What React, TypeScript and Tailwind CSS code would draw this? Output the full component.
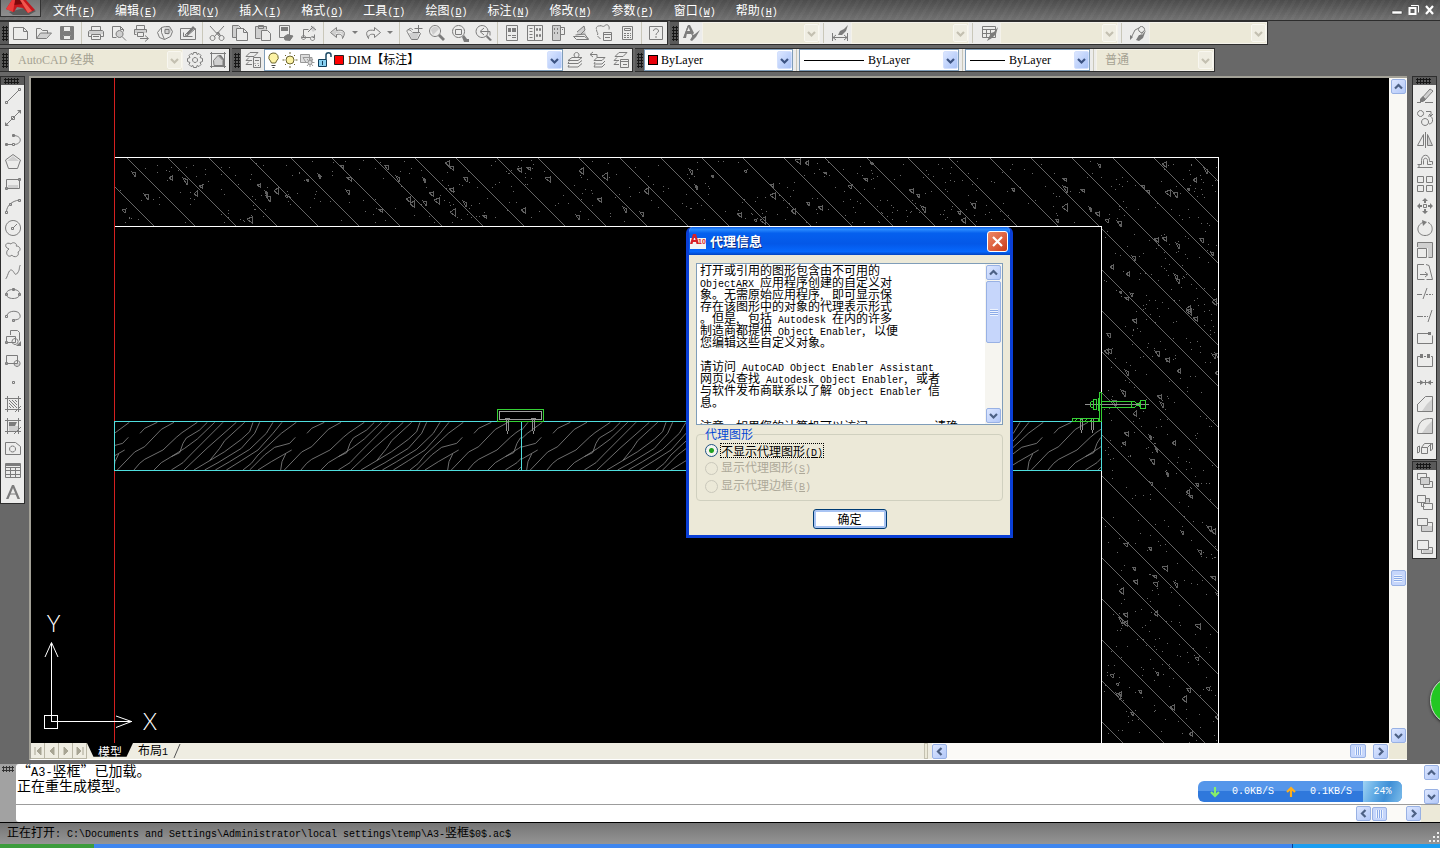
import React from "react";

const CJK = "font-['Noto_Sans_CJK_SC',sans-serif]";
const MONO = "font-['Liberation_Mono',monospace]";
const SERIF = "font-['Liberation_Serif','Noto_Sans_CJK_SC',serif]";

/** Sets half-width runs in a monospace face next to full-width Chinese text. */
function Mixed({ text, latin = "text-[10px]" }: { text: string; latin?: string }) {
  return (
    <>
      {text.split(/([\x20-\x7e]+)/).map((part, i) =>
        i % 2 ? (
          <span key={i} className={`${MONO} ${latin} whitespace-pre`}>
            {part}
          </span>
        ) : (
          part
        ),
      )}
    </>
  );
}

type IconDef = { name: string; d: string; fill?: string; soft?: string };

function Icon({ d, fill, soft }: { d: string; fill?: string; soft?: string }) {
  return (
    <svg width="18" height="18" viewBox="0 0 18 18" fill="none" stroke="#7c7c7c" className="shrink-0" aria-hidden="true">
      {soft && <path d={soft} fill="#cfcfcf" stroke="none" />}
      <path d={d} />
      {fill && <path d={fill} fill="#7c7c7c" stroke="none" />}
    </svg>
  );
}

const FILE_ICONS: IconDef[] = [
  { name: "新建", d: "M1.5 3.5h10l4 4v8h-14zM11.5 3.5v4h4" },
  { name: "打开", d: "M1.5 14.5v-10h4l2 2h5v3M1.5 14.5l4-5.500h11l-5 5.500z", soft: "M2 14l4-5h10l-5 5z" },
  { name: "保存", d: "M2.500 2.500h13v13h-13zM5.500 2.500v5h7v-5M5.500 15.500v-4h7v4", fill: "M3 3h2.500v5h7v-5h2.500v12h-2v-4h-8v4h-2z" },
];
const PRINT_ICONS: IconDef[] = [
  { name: "打印", d: "M4.500 6.500v-4h9v4M4.500 12.500h-3v-5l1-1h13l1 1v5h-3M4.500 10.500h9v5h-9zM6 12.500h6", soft: "M2 7h14v3h-14z" },
  { name: "打印预览", d: "M6.500 13.500h-4v-11h8l3 3v2M10.500 2.500v3h3M9.500 6.500a3.500 3.500 0 1 0 .1 0M12 12.500l4 4", soft: "M6 10a3.500 3.500 0 1 0 7 0a3.500 3.500 0 1 0-7 0" },
  { name: "发布", d: "M3.500 5.500v-4h8v4M3.500 10.500h-2v-5h12v3M4.500 8.500h6v4h-6zM7 14.500h8M12 11.500l3.500 3-3.500 3", soft: "M2 6h11v3h-11z" },
  { name: "三维打印", d: "M9.500 2.500l-4 1-4 5 2 5 5 2 6-3 2-5-3-5zM5.500 3.500v5l3 7M9 5.500h4v4h-4z", soft: "M9 3h5l2 4-4 4-4-3z" },
  { name: "图纸集", d: "M1.500 4.500h15v11h-15zM4.500 12.500h9M4.500 8.500v4M6 11l8-8 2 2-8 7z", fill: "M7 10l7-8 2 2-7 7z" },
];
const EDIT_ICONS: IconDef[] = [
  { name: "剪切", d: "M2 2l10 11M16 2l-10 11M4.500 11.500a2.500 2.500 0 1 0 .1 0M13.500 11.500a2.500 2.500 0 1 0 .1 0", fill: "M8 8h3l2 4h-1z" },
  { name: "复制", d: "M5.500 13.500h-4v-12h6l3 3M5.500 4.500h7l4 4v8h-11zM12.500 4.500v4h4", soft: "M2 2h5l2 2h-4v9h-3z" },
  { name: "粘贴", d: "M6.500 14.500h-5v-12h11v3M4.500 1.500h5v3h-5zM7.500 6.500h6l3 3v7h-9z", soft: "M2 3h10v3h-5v8h-5z" },
  { name: "特性匹配", d: "M2.500 1.500h10v12h-10zM4.500 4.500h6M4.500 6.500h6M7 13l3-2 6 1-3 4h-5z", fill: "M4 3h7v4h-7zM8 12l3-2 5 2-3 5-5-1z" },
  { name: "块编辑器", d: "M8.500 5.500h-5v8M10.500 13.500h-9M12.500 13.500h2v-3M8 8l5-5M11 2l5 4M3.500 11.500a2 2 0 1 0 .1 0M12.500 12.500a2 2 0 1 0 .1 0", soft: "M10 4l4-2 2 4-3 2z" },
];
const UNDO: IconDef = { name: "放弃", d: "M7.500 3.500l-6 5 6 5v-3c5-1 6 1 6 4 5-8-1-9-6-8z", soft: "M7 5l-5 4 5 3v-3h5l3 3-1-4-7-1z" };
const REDO: IconDef = { name: "重做", d: "M10.500 3.500l6 5-6 5v-3c-5-1-6 1-6 4-5-8 1-9 6-8z" };
const VIEW_ICONS: IconDef[] = [
  { name: "平移", d: "M2.500 8.500c-2-3 2-4 4-1M2.500 8.500l4 7h6l3-6-2-2M3 6c2-3 4-1 5 0M7.500 8.500h7M13.500 1v8M9.500 4.500h8", soft: "M4 9h10l-2 6h-5z" },
  { name: "实时缩放", d: "M7 1.500a5.500 5.500 0 1 0 .1 0", fill: "M10 12l2-2 5 5-2 2z", soft: "M3 6c0-3 6-5 8-1l-6 6z" },
  { name: "窗口缩放", d: "M7.500 1.500a6 6 0 1 0 .1 0M4.500 5.500h6v5h-6z", fill: "M11 13l2-2 3 4h2v3h-5z" },
  { name: "缩放上一个", d: "M8 1.500a6 6 0 1 0 .1 0M7 7.500h9v4M10 4l-4 3.500 4 3.500", fill: "M12 13l1-2 5 5-2 1z" },
];
const PALETTE_ICONS: IconDef[] = [
  { name: "特性", d: "M3.500 1.500h11v15h-11zM9 11.500h4M9 13.500h4", fill: "M5 4h3v4h-3zM9 4h4v4h-4zM5 11h3v1h-3z" },
  { name: "设计中心", d: "M1.500 1.500h15v15h-15zM8.500 1.500v15M3.500 4.500h3M3.500 7.500h3M3.500 10.500h3M3.500 13.500h3M10.500 4.500h1v2h-1zM13.500 4.500h1v2h-1zM10.500 10.500h1v2h-1zM13.500 10.500h1v2h-1z" },
  { name: "工具选项板", d: "M3.500 1.500h8v15h-8zM11.500 3.500h4v7h-4M5.500 4v2M8.500 4v2M5.500 8v2M8.500 8v2M13.500 5v1", soft: "M4 2h7v14h-7z" },
  { name: "图纸集管理器", d: "M1.500 12.500l3 3h12l-4-3zM3.500 11l9-1 4 5M5 8l7-6 1 4-4 4", soft: "M5 8l7-6 2 9h-9z" },
  { name: "标记集", d: "M5 1.500c2 0 3 2 5 0s5 0 4 4M1.500 5.500c-1-3 2-4 4-3.500M1.500 6c0 2 2 3 1 5M8.500 8.500h8v8h-8zM8.500 10.500h8M10 13.500h5M2.500 12l3 3" },
  { name: "快速计算器", d: "M4.500 2.500h10v13h-10zM6.500 4.500h6v2h-6z", fill: "M6 9h2v1h-2zM9 9h2v1h-2zM12 9h1v1h-1zM6 11h2v1h-2zM9 11h2v1h-2zM12 11h1v1h-1zM6 13h2v1h-2zM9 13h2v1h-2zM12 13h1v1h-1z" },
];
const HELP: IconDef = { name: "帮助", d: "M2.500 2.500h13v13h-13zM6.500 7c0-3 5-3 5 0 0 2-2.500 1.500-2.500 4M9 12v2" };

const BRUSH = "M9 13l2-4 3-1 4-5-2 7-4 4-5 3z";
const TEXT_STYLE: IconDef = { name: "文字样式", d: "M2 14l4-12h1l4 11M4 9.500h5", fill: "M1 14l5-13h2l4 8-2 2-1-2h-4l-1 5zM5 7h3l-1-4zM8 16l3-5 2-1 5-4-4 7-4 4z" };
const DIM_STYLE: IconDef = { name: "标注样式", d: "M1.500 9v8M16.500 9v8M2 13.500h14M5 11l-3 2.500 3 2.500M13 11l3 2.500-3 2.500", fill: "M7 11l2-4 4-2 4-4-2 6-4 4z" };
const TABLE_STYLE: IconDef = { name: "表格样式", d: "M2.500 2.500h13v11h-13zM2.500 5.500h13M2.500 9.500h13M6.500 5.500v8M10.500 5.500v8", fill: BRUSH };
const LEADER_STYLE: IconDef = { name: "多重引线样式", d: "M2 14l4-8 4-2M12.500 2.500a3 3 0 1 0 .1 0M14 8l-3 4", fill: "M1 16v-5l3 2zM7 16l3-5h3l4-5-3 8-4 3z" };

const GEAR: IconDef = { name: "工作空间设置", d: "M9 6.500a2.500 2.500 0 1 0 .1 0M7.500 1.500h3l.5 2 2-1 2 2-1 2 2.500 1v3l-2.500 1 1 2-2 2-2-1-.5 2h-3l-.5-2-2 1-2-2 1-2-2.500-1v-3l2.500-1-1-2 2-2 2 1z" };
const HOME: IconDef = { name: "我的工作空间", d: "M1 2.500h16M1 15.500h16M2.500 1v16M15.500 1v16M4.500 9.500l4.500-5 5 5v5h-9z", soft: "M5 9l4-4 5 5v5h-9z", fill: "M9 4h3l3 4v7h-1v-6z" };
const LAYER_MANAGER: IconDef = { name: "图层特性管理器", d: "M2 5.500l4-4h8l-4 4zM8 9.500h-6l3-3M8 13.500h-6l3-3M9.500 6.500h7v10h-7zM11 9.500h4M11 12v1M14 12v1M11 14.500h1M14 14.500h1" };
const LAYER_ICONS: IconDef[] = [
  { name: "置为当前图层", d: "M2 9.500l4-3h10l-4 3zM3 10.500l-1 2h10l4-3M3 14l-1 2h10l4-3.500M10.500 1.500a2.500 2.500 0 1 0 .1 0" },
  { name: "上一个图层", d: "M1 3.500h7v3M4 1l-3 2.500 3 2.500M5 9.500l3-3h8l-3 3zM6 11l-1 2h8l3-3M6 14l-1 2h8l3-3" },
  { name: "图层状态管理器", d: "M3 5.500l4-4h8l-4 4zM7 9.500h-5l3-3M7 13.500h-5l3-3M8.500 8.500h8v8h-8zM8.500 10.500h8M11 13.500h4" },
];

const DRAW_ICONS: IconDef[] = [
  { name: "直线", d: "M3 15L15 3M1.500 14.500h2v2h-2zM14.500 1.500h2v2h-2z" },
  { name: "构造线", d: "M2 16L16 2M7.500 7.500h3v3h-3z", fill: "M1 17v-4l4 4zM17 1v4l-4-4z" },
  { name: "多段线", d: "M2 13.500h7M9 4.500c10 0 9 9 1 9M1.500 12.500h2v2h-2zM8.500 12.500h2v2h-2zM8.500 3.500h2v2h-2z" },
  { name: "正多边形", d: "M9 1.500l7.500 5.500-3 8.500h-9l-3-8.500z", soft: "M9 3l6 5h-12z" },
  { name: "矩形", d: "M2.500 4.500h13v9h-13zM1.500 12.500h2v2h-2zM14.500 3.500h2v2h-2z", soft: "M4 10h10v3h-10z" },
  { name: "圆弧", d: "M2.500 15c0-6 5-11 13-12M1.500 14.500h2v2h-2zM5.500 6.500h2v2h-2zM14.500 2.500h2v2h-2z" },
  { name: "圆", d: "M9 1.500a7.500 7.500 0 1 0 .1 0M9 9l4-4M7.500 8.500h2v2h-2z" },
  { name: "修订云线", d: "M5 8c-6-2-3-8 2-5 2-3 7 0 5 2 5 0 5 5 2 6 2 5-5 6-6 3-4 4-8-3-3-6z" },
  { name: "样条曲线", d: "M1.500 16c2-1 3-10 6-9s3 7 6 3 1-6 3-8" },
  { name: "椭圆", d: "M9 4.500c9 0 9 9 0 9s-9-9 0-9M1.500 8.500h2v2h-2zM14.500 8.500h2v2h-2zM8.500 3.500h2v2h-2z" },
  { name: "椭圆弧", d: "M3 8c2-5 12-5 13 0 1 4-3 5-7 5M1.500 8.500h2v2h-2zM8.500 12.500h2v2h-2z" },
  { name: "插入块", d: "M6.500 6v-4.500h7l2 2v8M2.500 7.500h9v6h-9zM11 9.500a3 3 0 1 0 .1 0M1.500 12.500h2v2h-2z", fill: "M17 12v5h-5z" },
  { name: "创建块", d: "M2.500 4.500h11v8h-11zM13 9.500a3 3 0 1 0 .1 0M1.500 11.500h2v2h-2z", soft: "M10 12a3 3 0 0 0 6 0z" },
  { name: "点", d: "M8.500 8.500h2v2h-2z" },
  { name: "图案填充", d: "M1 3.500h16M1 14.500h16M3.500 1v16M14.500 1v16M5 5l8 8M5 8l5 5M8 5l5 5M5 11l2 2M11 5l2 2M11 17l6-6" },
  { name: "渐变色", d: "M1 3.500h16M1 14.500h16M3.500 1v16M14.500 1v16M10 17l7-7", fill: "M5 5h8l-2 4h-6z", soft: "M5 9h9v5h-9z" },
  { name: "面域", d: "M1.500 3.500h10l5 4v8h-15zM8.500 7a3 3 0 1 0 .1 0" },
  { name: "表格", d: "M1.500 2.500h15v14h-15zM1.500 6.500h15M1.500 9.500h15M1.500 13.500h15M6.500 6v10M11.500 6v10", fill: "M2 3h14v2h-14z" },
  { name: "多行文字", d: "M5 11h8", fill: "M2 16l6-14h2l6 14h-2.500l-4.500-11-4.500 11z" },
];

const MODIFY_ICONS: IconDef[] = [
  { name: "删除", d: "M1 15.500h4M9 15.500h8M5 12l9-10 3 2-9 10z", fill: "M4 12l3-3 3 3-3 3h-3z", soft: "M8 9l6-7 2 2-6 8z" },
  { name: "复制", d: "M4.500 1.500a3 3 0 1 0 .1 0M9 9.500a3.500 3.500 0 1 0 .1 0M12 7a4 4 0 1 1 1 8M10 2.500h5v4M13 5l2 2 2-2" },
  { name: "镜像", d: "M9.500 1v16M7.500 3.500v11h-6zM11.500 3.500v11h5z", soft: "M12 5v9h4z" },
  { name: "偏移", d: "M1.500 14.500h15M1.500 11.500h4v-4c0-7 8-7 8 0v1h3v3M3 14.500v-3M7.500 11.500v-4c0-3 4-3 4 0v4h4" },
  { name: "阵列", d: "M1.500 1.500h6v6h-6zM10.500 1.500h6v6h-6zM1.500 10.500h6v6h-6zM10.500 10.500h6v6h-6z" },
  { name: "移动", d: "M7.500 7.500h3v3h-3z", fill: "M9 1l3 3h-2v2h-2v-2h-2zM9 17l3-3h-2v-2h-2v2h-2zM1 9l3-3v2h2v2h-2v2zM17 9l-3-3v2h-2v2h2v2z" },
  { name: "旋转", d: "M7 3.500c-8 3-6 13 2 13 9 0 9-11 3-13", fill: "M6 1l5 2-4 4z" },
  { name: "缩放", d: "M1.500 6v-4.500h15v15h-4M1.500 7.500h9v9h-9z", soft: "M2 2h14v14h-4v-9h-10z" },
  { name: "拉伸", d: "M8 1.500h-6.500v15h7M10 1.500l3 1 3.500 14h-6M4 11.500h7M9 9l3 2.500-3 2.500" },
  { name: "修剪", d: "M1 9.500h5M10 9.500h2M13 9.500h2M16 9.500h1M7 14l4-11" },
  { name: "延伸", d: "M1 9.500h6M8 9.500h2M11 9.500h1M12 15l4-12" },
  { name: "打断于点", d: "M14 4.500h-12.500v10h15v-8", fill: "M12 3h3v3h-3z" },
  { name: "打断", d: "M4 5.500h-2.500v10h15v-10h-1.500M10 5.500h-2", fill: "M4 3h3v4h-3zM11 3h3v4h-3z" },
  { name: "合并", d: "M1 9.500h16M9.500 7v5", fill: "M4 7l4 2.500-4 2.500zM15 7l-4 2.500 4 2.500z" },
  { name: "倒角", d: "M1.500 9v7.500h15v-15h-7l-8 8", soft: "M11 9l5-5v12h-10z" },
  { name: "圆角", d: "M1.500 16.500h15v-15h-3c-8 0-12 5-12 15", soft: "M11 9l5-5v12h-10z" },
  { name: "分解", d: "M5.500 8.500h6v6h-6zM5.500 8.500l3-4h7l-4 4M1.500 8v6l2-1v-6zM14.500 6v6l2-2v-6z" },
];
const ORDER_ICONS: IconDef[] = [
  { name: "前置", d: "M1.500 1.500h9v4M1.500 1.500v6h3M4.500 5.500h9v7h-9zM13 9.500h3.500v6h-9v-3", soft: "M5 6h8v6h-8z" },
  { name: "后置", d: "M1.500 1.500h8v7h-8zM9.500 4.500h4v4M5.500 8.500v4h3M7.500 9.500h9v6h-9z", soft: "M10 5h3v4h-3z" },
  { name: "置于对象之上", d: "M1.500 2.500h10v7h-10zM11.500 6.500h5v9h-11v-6", soft: "M6 10h10v5h-10z" },
  { name: "置于对象之下", d: "M1.500 2.500h11v9h-11zM12.500 9.500h4v6h-11v-4", soft: "M7 12h9v3h-9z" },
];

function ToolButton({ icon }: { icon: IconDef }) {
  return (
    <button type="button" aria-label={icon.name} className="flex h-[22px] w-[23px] shrink-0 items-center justify-center">
      <Icon d={icon.d} fill={icon.fill} soft={icon.soft} />
    </button>
  );
}

function Buttons({ icons }: { icons: IconDef[] }) {
  return (
    <>
      {icons.map((icon) => (
        <ToolButton key={icon.name} icon={icon} />
      ))}
    </>
  );
}

function Sep() {
  return (
    <div className="flex w-1.5 shrink-0 justify-center">
      <div className="h-full w-px bg-[#c9c7ba]" />
    </div>
  );
}

function Grip({ vertical }: { vertical?: boolean }) {
  const dots = "bg-[radial-gradient(#161616_50%,transparent_55%)] bg-[length:3px_3px]";
  return vertical ? (
    <div className="flex h-2 w-full items-center bg-[#5a5a5a] px-[3px]">
      <div className={`h-[6px] w-[15px] ${dots}`} />
    </div>
  ) : (
    <div className="flex w-[9px] shrink-0 items-center justify-center bg-[#5a5a5a]">
      <div className={`h-[15px] w-[6px] ${dots}`} />
    </div>
  );
}

function Bar({ label, children }: { label: string; children: React.ReactNode }) {
  return (
    <div role="toolbar" aria-label={label} className="flex h-6 shrink-0 border-y border-r border-[#2e2e2e] bg-[#ececeb]">
      <Grip />
      {children}
    </div>
  );
}

function Chevron({ dir, className = "stroke-[#4d6185]" }: { dir: "up" | "down" | "left" | "right"; className?: string }) {
  const d = {
    up: "M1 6.500l3.500-3.500 3.500 3.500",
    down: "M1 3l3.500 3.500 3.500-3.500",
    left: "M6.500 1l-3.500 3.500 3.500 3.500",
    right: "M3 1l3.500 3.500-3.500 3.500",
  }[dir];
  return (
    <svg width="9" height="9" viewBox="0 0 9 9" fill="none" strokeWidth="2.200" className={className} aria-hidden="true">
      <path d={d} />
    </svg>
  );
}

function Combo({
  label,
  value = "",
  width,
  disabled,
  lead,
  pad = "pl-1",
}: {
  label: string;
  value?: string;
  width: string;
  disabled?: boolean;
  lead?: React.ReactNode;
  pad?: string;
}) {
  return (
    <div
      className={`flex shrink-0 items-center border ${width} ${
        disabled ? "border-[#f4f2ea] bg-[#ece9d8]" : "border-[#7f9db9] bg-white"
      }`}
    >
      {lead}
      <select
        aria-label={label}
        disabled={disabled}
        className={`h-full min-w-0 flex-1 appearance-none bg-transparent text-xs opacity-100 outline-none ${pad} ${SERIF} ${
          disabled ? "text-[#a5a293]" : "text-black"
        }`}
      >
        <option>{value}</option>
      </select>
      <span
        className={`pointer-events-none flex h-[18px] w-[15px] shrink-0 items-center justify-center rounded-[2px] border ${
          disabled ? "border-[#f8f7f0] bg-[#efede2]" : "border-[#d3e0fd] bg-linear-to-br from-[#dbe6ff] to-[#a9c2f7]"
        }`}
      >
        <Chevron dir="down" className={disabled ? "stroke-[#c3c0b1]" : "stroke-[#3c5382]"} />
      </span>
    </div>
  );
}

function ScrollButton({ label, dir }: { label: string; dir: "up" | "down" | "left" | "right" }) {
  return (
    <button
      type="button"
      aria-label={label}
      className="flex size-[15px] shrink-0 items-center justify-center rounded-[2px] border border-[#98b1e4] bg-linear-to-br from-[#dde7ff] to-[#b3c8f8]"
    >
      <Chevron dir={dir} />
    </button>
  );
}

function Thumb({ className, horizontal }: { className: string; horizontal?: boolean }) {
  return (
    <div className={`flex shrink-0 items-center justify-center rounded-[2px] border border-[#98b1e4] bg-[#c6d6fb] ${className}`}>
      <div
        className={
          horizontal
            ? "h-2 w-[7px] bg-[repeating-linear-gradient(90deg,#eef4fe_0_1px,#8cabe8_1px_2px)]"
            : "h-[7px] w-2 bg-[repeating-linear-gradient(#eef4fe_0_1px,#8cabe8_1px_2px)]"
        }
      />
    </div>
  );
}

const MENUS: [string, string][] = [
  ["文件", "F"],
  ["编辑", "E"],
  ["视图", "V"],
  ["插入", "I"],
  ["格式", "O"],
  ["工具", "T"],
  ["绘图", "D"],
  ["标注", "N"],
  ["修改", "M"],
  ["参数", "P"],
  ["窗口", "W"],
  ["帮助", "H"],
];

function Accel({ k }: { k: string }) {
  return (
    <span className={`${MONO} text-[10px]`}>
      (<span className="underline">{k}</span>)
    </span>
  );
}

function MenuBar() {
  return (
    <header className="flex h-[21px] shrink-0 items-start justify-between border-b border-[#2d2d2d] bg-[repeating-linear-gradient(120deg,#ffffff08_0_3px,transparent_3px_7px),linear-gradient(#4c4c4c,#717171)]">
      <div className="flex items-start">
        <button type="button" aria-label="应用程序菜单" className="h-[17px] w-[41px] border border-t-0 border-[#333] bg-linear-to-b from-[#777] to-[#8f8f8f]">
          <svg width="38" height="16" viewBox="0 0 38 16" aria-hidden="true">
            <path d="M8 12l4 3h16l7-4-8-4z" fill="#5a5a5a" />
            <path d="M5 9L11 0h14l9 10-7 3-5-5-6-1-3 5z" fill="#c5161c" />
            <path d="M14 0h6l2 4-9 1z" fill="#7d080c" />
            <path d="M5 9L11 0h3l-2 12z" fill="#ec3b3b" />
            <path d="M22 0l9 11-4 2-8-13z" fill="#f05850" />
          </svg>
        </button>
        <nav className={`flex gap-5 pl-3 text-xs leading-5 text-white ${CJK}`}>
          {MENUS.map(([name, k]) => (
            <button key={name} type="button" className="whitespace-nowrap">
              {name}
              <Accel k={k} />
            </button>
          ))}
        </nav>
      </div>
      <div className="flex gap-1 pt-1 pr-1">
        <button type="button" aria-label="最小化">
          <svg width="13" height="12" viewBox="0 0 13 12" aria-hidden="true">
            <path d="M2 7h10v3h-10z" fill="#fff" stroke="#333" strokeWidth=".5" />
          </svg>
        </button>
        <button type="button" aria-label="还原">
          <svg width="13" height="12" viewBox="0 0 13 12" fill="none" stroke="#fff" aria-hidden="true">
            <path d="M4 1.500h7.500v7" />
            <path d="M2.500 4h6v6h-6z" strokeWidth="2" />
          </svg>
        </button>
        <button type="button" aria-label="关闭">
          <svg width="12" height="12" viewBox="0 0 12 12" fill="none" stroke="#fff" strokeWidth="2.200" aria-hidden="true">
            <path d="M2 2l7 8M9 2l-7 8" />
          </svg>
        </button>
      </div>
    </header>
  );
}

function DropArrow({ label }: { label: string }) {
  return (
    <button type="button" aria-label={label} className="flex w-3 shrink-0 items-center justify-center">
      <svg width="6" height="4" viewBox="0 0 6 4" aria-hidden="true">
        <path d="M0 0h6l-3 3z" fill="#7c7c7c" />
      </svg>
    </button>
  );
}

function StyleCombo({ icon }: { icon: IconDef }) {
  return (
    <>
      <ToolButton icon={icon} />
      <Combo label={icon.name} width="w-[118px]" disabled />
    </>
  );
}

function WideSep() {
  return <div className="my-px mr-1 ml-[3px] w-px shrink-0 bg-[#c9c7ba]" />;
}

function LayerState() {
  return (
    <svg width="80" height="18" viewBox="0 0 80 18" fill="none" className="shrink-0" aria-hidden="true">
      <path d="M8 2a4.500 4.500 0 0 0-2.500 8l1 2h4l1-2a4.500 4.500 0 0 0-3.500-8z" fill="#fdf3a4" stroke="#6b642e" />
      <path d="M6.500 14.500h4M7.500 16.500h2" stroke="#444" />
      <circle cx="25" cy="9" r="4" fill="#fdf3a4" stroke="#6b642e" />
      <path d="M25 1v2M25 15v2M17.500 9h2M30.500 9h2M20 4l1 1M29 13l1 1M20 14l1-1M29 5l1-1" stroke="#6b642e" />
      <path d="M35.500 3.500h9v8h-9zM38 6.500h9v5h-6z" stroke="#999" fill="#ddd" />
      <path d="M45 7v9M40.500 11.500h9M42 8l6 7M48 8l-6 7" stroke="#999" />
      <circle cx="45" cy="11.500" r="2" fill="#ddd" stroke="#999" />
      <path d="M61 8v-4c0-3 5-3 5 0v2" stroke="#1d4b66" strokeWidth="1.500" />
      <path d="M53.500 8.500h8v7h-8z" fill="#88d0f0" stroke="#123f5c" />
      <path d="M57.500 10v4" stroke="#123f5c" />
      <path d="M69.500 4.500h9v9h-9z" fill="#f00" stroke="#222" />
    </svg>
  );
}

const LINE = "h-px shrink-0 bg-black";

function Toolbars() {
  return (
    <div className="flex shrink-0 flex-col gap-[3px] overflow-hidden bg-[#686868] pb-1">
      <div className="flex gap-0.5">
        <Bar label="标准">
          <Buttons icons={FILE_ICONS} />
          <Sep />
          <Buttons icons={PRINT_ICONS} />
          <Sep />
          <Buttons icons={EDIT_ICONS} />
          <Sep />
          <ToolButton icon={UNDO} />
          <DropArrow label="放弃列表" />
          <ToolButton icon={REDO} />
          <DropArrow label="重做列表" />
          <Sep />
          <Buttons icons={VIEW_ICONS} />
          <Sep />
          <Buttons icons={PALETTE_ICONS} />
          <Sep />
          <ToolButton icon={HELP} />
        </Bar>
        <Bar label="样式">
          <StyleCombo icon={TEXT_STYLE} />
          <WideSep />
          <StyleCombo icon={DIM_STYLE} />
          <WideSep />
          <StyleCombo icon={TABLE_STYLE} />
          <WideSep />
          <StyleCombo icon={LEADER_STYLE} />
        </Bar>
      </div>
      <div className="flex gap-0.5">
        <Bar label="工作空间">
          <Combo label="工作空间" value="AutoCAD 经典" width="w-[174px]" pad="pl-2" disabled />
          <Buttons icons={[GEAR, HOME]} />
        </Bar>
        <Bar label="图层">
          <ToolButton icon={LAYER_MANAGER} />
          <Combo label="图层" value="DIM【标注】" width="w-[299px]" pad="pl-[3px]" lead={<LayerState />} />
          <Buttons icons={LAYER_ICONS} />
        </Bar>
        <Bar label="特性">
          <Combo
            label="颜色"
            value="ByLayer"
            width="w-[149px]"
            pad="pl-[3px]"
            lead={<span className="ml-[3px] size-2.5 shrink-0 border border-black bg-red-600" />}
          />
          <Sep />
          <Combo label="线型" value="ByLayer" width="w-[160px]" lead={<span className={`ml-1 w-[60px] ${LINE}`} />} />
          <Sep />
          <Combo label="线宽" value="ByLayer" width="w-[125px]" lead={<span className={`ml-1 w-[35px] ${LINE}`} />} />
          <Sep />
          <Combo label="打印样式" value="普通" width="w-[118px]" pad="pl-2" disabled />
        </Bar>
      </div>
    </div>
  );
}

/* ---------- drawing ---------- */

function random(seed: number) {
  let s = seed;
  return () => {
    s = (s * 1664525 + 1013904223) % 4294967296;
    return s / 4294967296;
  };
}

function concrete() {
  const rnd = random(7);
  let stones = "";
  let grit = "";
  let n = 0;
  while (n < 1000) {
    const x = Math.round(116 + rnd() * 1100);
    const y = Math.round(160 + rnd() * 582);
    if (y > 222 && x < 1104) continue;
    n++;
    if (n % 6 === 0) {
      const a = 3 + Math.round(rnd() * 2);
      const b = Math.round(rnd() * 3);
      stones += rnd() > 0.5 ? `M${x} ${y}l${a} ${b - 1}l-1 ${a}z` : `M${x} ${y}l${a} ${a - 1}v-${a + b - 1}z`;
    } else {
      grit += `M${x} ${y}h1`;
    }
  }
  return { stones, grit };
}

const CONCRETE = concrete();
const HATCH = Array.from({ length: 28 }, (_, i) => {
  const x = Math.round(85 + i * 41.08);
  return `M${x} 157l640 640`;
}).join("");

/* One repeat of the wood grain, 502 units wide at a third of a pixel. */
const GRAIN = [
  "M96 850L110 835L148 817",
  "M28 960L80 906L110 890L160 838L198 817",
  "M78 960L95 940L110 928L165 900L205 862L222 848L268 817",
  "M138 960L160 938L190 920L215 908L225 880L235 864L275 840L298 817",
  "M190 920L230 895L268 867L320 817",
  "M190 960L225 938L250 912L345 817",
  "M228 960L300 892L385 817",
  "M258 960L305 932L335 895L350 872L410 817",
  "M305 932L350 905L400 868L425 845L435 817",
  "M290 960L330 938L400 895L440 850L455 817",
  "M322 960L365 935L425 898L475 850L495 817",
  "M355 960L400 932L450 900L495 850L522 817",
  "M405 960L430 940L450 915L520 850L565 817",
  "M425 960L470 915L500 892L545 880L562 862",
  "M450 960L490 935L551 900",
  "M518 960L522 935L533 912",
].join("");

function Grain({ starts, clip }: { starts: number[]; clip: string }) {
  return (
    <g clipPath={clip} stroke="#8a8a8a" shapeRendering="auto">
      {starts.map((x) => (
        <path key={x} d={GRAIN} transform={`translate(${x - 32} 150) scale(.33333)`} strokeWidth="2.400" />
      ))}
    </g>
  );
}

function Drawing() {
  return (
    <svg role="img" aria-label="模型空间" className="absolute inset-0 size-full bg-black" fill="none" shapeRendering="crispEdges">
      <defs>
        <clipPath id="wall">
          <path d="M114 157H1218V760H1101V226H114z" />
        </clipPath>
        <clipPath id="panel-a">
          <path d="M114 421H521V470H114z" />
        </clipPath>
        <clipPath id="panel-b">
          <path d="M521 421H1101V470H521z" />
        </clipPath>
      </defs>
      <g transform="translate(-31 -78)">
        <g clipPath="url(#wall)">
          <path d={HATCH} stroke="#656565" />
          <path d={CONCRETE.stones} stroke="#606060" />
          <path d={CONCRETE.grit} stroke="#666" transform="translate(0 .5)" />
        </g>
        <path d="M114 157.500H1218.500V760M114 226.500H1101.500V760" stroke="#fff" />
        <Grain starts={[-27, 140, 307, 474]} clip="url(#panel-a)" />
        <Grain starts={[386, 553, 720, 887, 1054]} clip="url(#panel-b)" />
        <path d="M114.500 78V760" stroke="#d42020" />
        <path d="M114.500 421.500H1101.500V470.500H114.500zM521.500 421V470" stroke="#4fdede" />
        <path d="M497.500 409.500h46v12h-46z" stroke="#35d035" />
        <path d="M499.500 411.500h42v8h-42z" stroke="#a0a0a0" />
        <path d="M505 418.500h5M531 418.500h5M506.500 419v12M508.500 419v12M507.500 431v3M532.500 419v12M534.500 419v12M533.500 431v3" stroke="#909090" />
        <path d="M1080.500 418v12M1082.500 418v12M1081.500 430v3M1091.500 418v12M1093.500 418v12M1092.500 430v3M1085 404.500h64" stroke="#909090" />
        <path d="M1072.500 418.500h26v3h-26zM1099.500 392.500h2v29h-2zM1075 421l3-3M1080 421l3-3M1085 421l3-3M1090 421l3-3" stroke="#35d035" />
        <path d="M1098.500 398v13M1096.500 399.500h-3v10h3zM1093.500 400.500l-3 2v4l3 2M1101.500 401.500h30M1101.500 407.500h30M1131.500 402v5M1131 401.500h3l3 2h2l2-3h4.500v8h-4.500l-2-3h-2l-3 2h-3M1140.500 400v9" stroke="#35d035" />
        <g stroke="#fff">
          <path d="M44.500 715.500h13v13h-13zM51.500 721.500V642.500M51.500 721.500H132" />
          <path d="M45 657l6.500-14.500 6.500 14.500M116 716l15.500 5.500-15.500 6" shapeRendering="auto" />
        </g>
        <g fill="#fff" className="font-['Lato',sans-serif] text-[23px] font-light" textAnchor="middle">
          <text x="53.500" y="632">Y</text>
          <text x="150" y="730">X</text>
        </g>
      </g>
    </svg>
  );
}

/* ---------- dialog ---------- */

const PROXY_TEXT = [
  "打开或引用的图形包含由不可用的",
  "ObjectARX 应用程序创建的自定义对",
  "象。无需原始应用程序,即可显示保",
  "存在该图形中的对象的代理表示形式",
  "。但是,包括 Autodesk 在内的许多",
  "制造商都提供 Object Enabler,以便",
  "您编辑这些自定义对象。",
  "",
  "请访问 AutoCAD Object Enabler Assistant",
  "网页以查找 Autodesk Object Enabler,或者",
  "与软件发布商联系以了解 Object Enabler 信",
  "息。",
  "",
  "注意: 如果您的计算机可以访问 Internet,请确",
];

const OPTIONS: [string, string][] = [
  ["不显示代理图形", "D"],
  ["显示代理图形", "S"],
  ["显示代理边框", "B"],
];

function ProxyDialog() {
  return (
    <section
      role="dialog"
      aria-labelledby="proxy-title"
      className={`absolute top-[149px] left-[655px] w-[327px] overflow-hidden rounded-t-md border-[3px] border-t-0 border-[#0a3fd6] bg-[#ece9d8] text-xs text-black ${CJK}`}
    >
      <div className="flex h-7 items-center gap-[3px] bg-[linear-gradient(#0a56e0,#2a8cff_8%,#0560ee_22%,#0458e8_60%,#0668fd_88%,#0343c0)] pr-0.5">
        <svg width="18" height="17" viewBox="0 0 18 17" aria-hidden="true">
          <path d="M1 5h16v11H1z" fill="#f3f3f3" />
          <path fillRule="evenodd" d="M1 11L4 1h3l3 10H7.500L7 9H4l-.5 2zM4.500 7h2l-1-4z" fill="#d81f26" />
          <text x="9" y="11" fontSize="7" fontWeight="700" fill="#d81f26" fontFamily="Liberation Sans">
            10
          </text>
        </svg>
        <h2 id="proxy-title" className="flex-1 text-[13px] font-bold text-white [text-shadow:1px_1px_#0a2a80]">
          代理信息
        </h2>
        <button
          type="button"
          aria-label="关闭"
          className="flex size-[21px] items-center justify-center rounded-[3px] border border-white bg-linear-to-br from-[#ee8866] to-[#cc3a12]"
        >
          <svg width="13" height="13" viewBox="0 0 13 13" stroke="#fff" strokeWidth="2.200" aria-hidden="true">
            <path d="M2 2l9 9M11 2l-9 9" />
          </svg>
        </button>
      </div>
      <div className="px-[7px] pt-2 pb-1.5">
        <div className="flex h-[162px] overflow-hidden border border-[#7f9db9] bg-white">
          <div className="min-w-0 flex-1 overflow-hidden pl-[3px] leading-3">
            {PROXY_TEXT.map((line, i) => (
              <p key={i} className="h-3 whitespace-pre">
                {line.split(",").map((part, j) => (
                  <React.Fragment key={j}>
                    {j > 0 && <span className="inline-block w-3">,</span>}
                    <Mixed text={part} />
                  </React.Fragment>
                ))}
              </p>
            ))}
          </div>
          <div className="flex w-[17px] flex-col items-center bg-[#f6f5f0] py-px">
            <ScrollButton label="向上滚动" dir="up" />
            <Thumb className="mt-px h-[62px] w-[15px]" />
            <div className="flex-1" />
            <ScrollButton label="向下滚动" dir="down" />
          </div>
        </div>
        <fieldset className="mt-px h-[75px] rounded-[4px] border border-[#d0d0bf] pl-2">
          <legend className="leading-4 text-[#0046d5]">代理图形</legend>
          <div className="flex flex-col gap-0.5">
            {OPTIONS.map(([name, k], i) => (
              <label key={k} className={`flex h-4 items-center gap-0.5 leading-4 ${i ? "text-[#aca899]" : ""}`}>
                <input
                  type="radio"
                  name="proxy"
                  defaultChecked={i === 0}
                  disabled={i > 0}
                  className="size-[13px] shrink-0 appearance-none rounded-full border border-[#1d5281] bg-[#f4f4ef] checked:bg-[radial-gradient(#21a121_0_2px,#f4f4ef_3px)] disabled:border-[#cac8bb] disabled:bg-transparent"
                />
                <span className={i ? "px-px" : "h-[15px] border border-dotted border-black leading-[13px]"}>
                  {name}
                  <Accel k={k} />
                </span>
              </label>
            ))}
          </div>
        </fieldset>
        <div className="flex justify-center pt-2">
          <button type="button" className="h-5 w-[74px] rounded-[3px] border border-[#003c74] bg-white leading-4 ring-2 ring-[#a9c4f3] ring-inset">
            确定
          </button>
        </div>
      </div>
    </section>
  );
}

/* ---------- tabs, command line, status ---------- */

const NAV: [string, string][] = [
  ["第一个布局", "M3 1v8M9 1v8l-4-4z"],
  ["上一个布局", "M8 1v8l-4-4z"],
  ["下一个布局", "M4 1v8l4-4z"],
  ["最后一个布局", "M9 1v8M3 1v8l4-4z"],
];

function LayoutTabs() {
  return (
    <div className="flex h-4 items-stretch bg-[#efede2]">
      <div className="flex">
        {NAV.map(([name, d]) => (
          <button key={name} type="button" aria-label={name} className="flex w-[14px] items-center justify-center border-r border-b border-[#b9b6a5] bg-[#efede2]">
            <svg width="12" height="10" viewBox="0 0 12 10" fill="#a8a594" stroke="#a8a594" aria-hidden="true">
              <path d={d} />
            </svg>
          </button>
        ))}
      </div>
      <div role="tablist" className={`flex text-xs leading-[15px] ${CJK}`}>
        <button type="button" role="tab" aria-selected="true" className="w-[46px] bg-black text-white [clip-path:polygon(0_0,100%_0,86%_86%,14%_86%)]">
          模型
        </button>
        <button type="button" role="tab" aria-selected="false" className="flex items-center pl-[5px] text-black">
          <span className="w-[35px] text-left">
            <Mixed text="布局1" />
          </span>
          <svg width="8" height="14" viewBox="0 0 8 14" stroke="#555" aria-hidden="true">
            <path d="M7 0L1 14" />
          </svg>
        </button>
      </div>
      <div className="flex-1" />
      <div className="mr-1 w-1 border border-[#c4c1b0] bg-[#ece9d8]" />
      <div className="flex w-[457px] items-center bg-[#fbfaf7]">
        <ScrollButton label="向左滚动" dir="left" />
        <div className="flex-1" />
        <Thumb horizontal className="mr-[7px] h-[14px] w-4" />
        <ScrollButton label="向右滚动" dir="right" />
        <div className="w-px" />
      </div>
      <div className="w-[18px] bg-[#ece9d8]" />
    </div>
  );
}

function SideBar({ label, icons }: { label: string; icons: IconDef[] }) {
  return (
    <div role="toolbar" aria-label={label} className="flex w-[25px] flex-col border border-[#2e2e2e] bg-[#ececeb]">
      <Grip vertical />
      <Buttons icons={icons} />
    </div>
  );
}

function NetMonitor() {
  return (
    <div className={`absolute right-[38px] bottom-[46px] flex h-[21px] w-[204px] items-center overflow-hidden rounded-md bg-[linear-gradient(#5596ea_0_50%,#2f78dc_50%)] text-[10px] text-white ${MONO}`}>
      <svg width="14" height="14" viewBox="0 0 14 14" fill="none" stroke="#86ee6c" strokeWidth="2.200" className="ml-[10px]" aria-hidden="true">
        <path d="M7 2v9M3 7l4 4 4-4" />
      </svg>
      <span className="ml-[10px] w-[52px]">0.0KB/S</span>
      <svg width="14" height="14" viewBox="0 0 14 14" fill="none" stroke="#ffae1c" strokeWidth="2.200" aria-hidden="true">
        <path d="M7 12v-9M3 7l4-4 4 4" />
      </svg>
      <span className="ml-3 flex-1">0.1KB/S</span>
      <span className="flex h-full w-[39px] items-center justify-center bg-[linear-gradient(110deg,#9fd3f3,#5fa9e4_35%,#3f8fd6_60%,#7dbdea)]">24%</span>
    </div>
  );
}

function CommandLine() {
  return (
    <section aria-label="命令行" className="flex h-[59px] shrink-0 border-b border-black bg-[#a2a2a2]">
      <div className="w-4 shrink-0 pt-0.5 pl-0.5">
        <div className="h-[6px] w-3 bg-[radial-gradient(#333_50%,transparent_55%)] bg-[length:3px_3px]" />
      </div>
      <div className="flex min-w-0 flex-1 flex-col rounded-l-[3px] bg-white">
        <div className="flex h-[41px] shrink-0 border-b border-[#9c9c9c]">
          <div className={`flex-1 pl-px text-[14px] leading-[15px] text-black ${CJK}`}>
            <p className="h-[15px] leading-[13px]">
              <Mixed text="“A3-竖框”已加载。" latin="text-xs" />
            </p>
            <p className="h-[15px] leading-[13px]">正在重生成模型。</p>
          </div>
          <div className="flex w-4 flex-col justify-between pt-px">
            <ScrollButton label="命令历史上移" dir="up" />
            <ScrollButton label="命令历史下移" dir="down" />
          </div>
        </div>
        <div className="flex min-h-0 flex-1">
          <input aria-label="命令" className="h-4 min-w-0 flex-1 bg-transparent text-xs outline-none" />
          <div className="flex w-[65px] items-center bg-[#fbfaf7]">
            <ScrollButton label="命令左移" dir="left" />
            <Thumb horizontal className="ml-px h-[14px] w-[15px]" />
            <div className="flex-1" />
            <ScrollButton label="命令右移" dir="right" />
          </div>
          <div className="w-[19px] bg-[#ece9d8]" />
        </div>
      </div>
    </section>
  );
}

export default function App() {
  return (
    <div className="relative flex h-screen flex-col overflow-hidden bg-[#686868]">
      <MenuBar />
      <Toolbars />
      <main className="flex min-h-0 flex-1 overflow-hidden">
        <aside className="w-[29px] shrink-0">
          <SideBar label="绘图" icons={DRAW_ICONS} />
        </aside>
        <div className="flex min-w-0 flex-1 flex-col border-t-2 border-b border-l-2 border-t-[#a3a197] border-b-white border-l-[#a3a197]">
          <div className="flex min-h-0 flex-1">
            <div className="relative min-w-0 flex-1 overflow-hidden">
              <Drawing />
              <ProxyDialog />
            </div>
            <div className="flex w-[18px] shrink-0 flex-col items-center bg-[#f9f8f4] pt-px">
              <ScrollButton label="视图上移" dir="up" />
              <div className="flex-1" />
              <Thumb className="h-4 w-[15px]" />
              <div className="h-[142px]" />
              <ScrollButton label="视图下移" dir="down" />
            </div>
          </div>
          <LayoutTabs />
        </div>
        <aside className="flex w-[33px] shrink-0 flex-col gap-px pl-[5px]">
          <SideBar label="修改" icons={MODIFY_ICONS} />
          <SideBar label="绘图次序" icons={ORDER_ICONS} />
        </aside>
      </main>
      <div className="h-1 shrink-0" />
      <CommandLine />
      <footer className="shrink-0">
        <div className={`flex h-[21px] items-center justify-between bg-linear-to-b from-[#757575] to-[#959595] pl-[7px] text-xs text-black ${CJK}`}>
          <p className="leading-5">
            <Mixed text={"正在打开: C:\\Documents and Settings\\Administrator\\local settings\\temp\\A3-竖框$0$.ac$"} />
          </p>
          <svg width="12" height="12" viewBox="0 0 12 12" fill="#eee" className="self-end" aria-hidden="true">
            <path d="M9 0h2v2H9zM9 4h2v2H9zM5 4h2v2H5zM9 8h2v2H9zM5 8h2v2H5zM1 8h2v2H1z" />
          </svg>
        </div>
        <div className="flex h-1">
          <div className="w-[94px] bg-[#3c9c3c]" />
          <div className="flex-1 bg-[#3f86ee]" />
          <div className="w-[148px] border-l border-[#0d3f90] bg-[#1b9df0]" />
        </div>
      </footer>
      <NetMonitor />
      <div className="absolute right-[-39px] bottom-[123px] size-[49px] rounded-full border border-[#ddd] bg-[#23c723] shadow-[0_1px_3px_#222]" />
    </div>
  );
}
